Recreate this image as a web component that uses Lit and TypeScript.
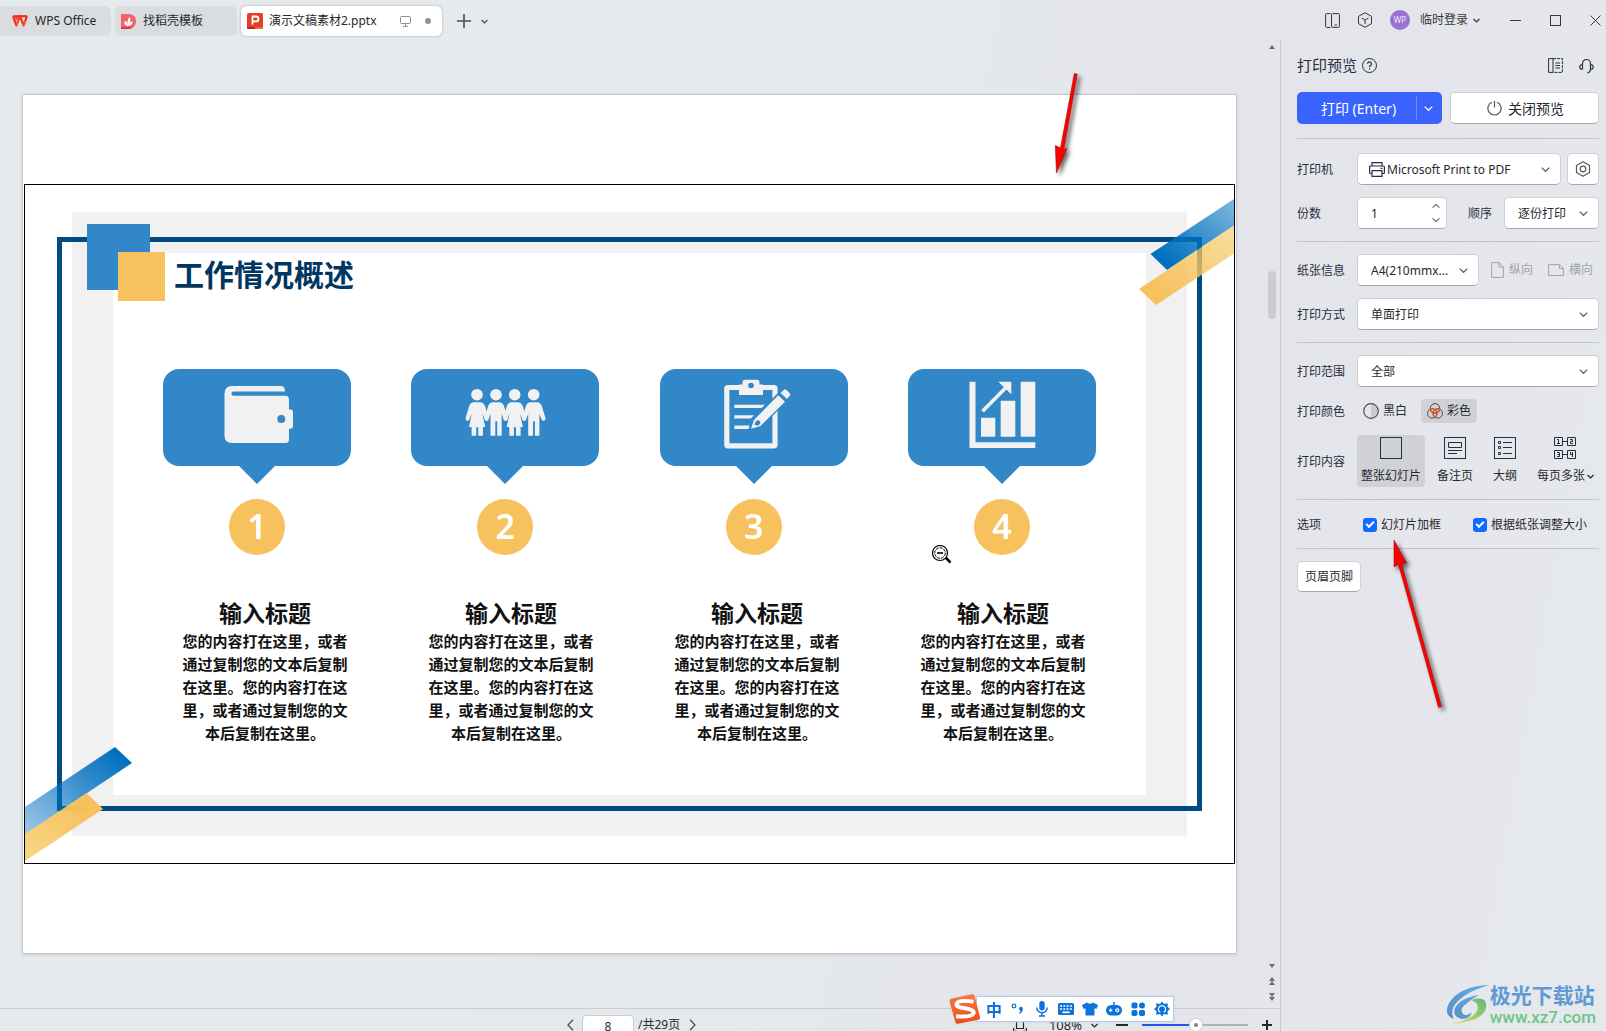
import { LitElement, html, svg, css } from "lit";
import { customElement } from "lit/decorators.js";

const shared = css`
  *, *::before, *::after { box-sizing: border-box; }
  svg { display: block; flex: none; }
  button, input, select {
    font: inherit;
    color: inherit;
    margin: 0;
    padding: 0;
    border: 0;
    background: none;
  }
  button { display: flex; align-items: center; justify-content: center; white-space: nowrap; }
`;

const chevron = (w = 9) => html`<svg width=${w} height=${w} viewBox="0 0 9 9" fill="none" stroke="currentColor" stroke-width=${w < 8 ? 1.700 : 1.200}><path d="M.7 2.600 4.500 6.300 8.300 2.600"/></svg>`;

/* ---------- Title bar with document tabs ---------- */

@customElement("title-bar")
class TitleBar extends LitElement {
  static styles = [shared, css`
    :host { display: flex; height: 40px; padding-top: 6px; color: #26282c; font-size: 12px; line-height: 16px; }
    .tabs { display: flex; gap: 4px; }
    .tab {
      height: 30px;
      border-radius: 6px;
      background: #d9dde0;
      justify-content: flex-start;
      gap: 7px;
      padding: 0 12px 0 6px;
    }
    .home { width: 111px; padding: 0 0 0 12px; border-radius: 0 6px 6px 0; }
    .store { width: 122px; }
    .doc { width: 201px; background: #fff; box-shadow: 0 0 2px 1px #c9cbd0; padding-right: 11px; gap: 6px; }
    .name { flex: 1; text-align: left; }
    .dot { width: 6px; height: 6px; border-radius: 50%; background: #8f9194; margin: 0 0 0 8px; }
    .add { margin-left: 8px; width: 20px; height: 30px; color: #4c4e52; }
    .more { width: 20px; height: 30px; color: #4c4e52; }
    .right { margin-left: auto; display: flex; align-items: center; height: 28px; color: #35373d; }
    .account { gap: 5px; margin-left: 17px; }
    .avatar {
      width: 20px; height: 20px; border-radius: 50%; background: #9874d0; color: #efe6fa;
      font-size: 8px; line-height: 20px; text-align: center; margin-right: 5px;
    }
    .icon { width: 16px; height: 28px; }
    .cube { margin-left: 16px; }
    .min { margin-left: 27px; }
    .max, .close { margin-left: 24px; }
    .close { margin-right: 3px; }
  `];
  render() {
    return html`
      <nav class="tabs">
        <button class="tab home">
          <svg width="16" height="12" viewBox="0 0 16 12"><g fill="none" stroke-width="2.100" stroke-linejoin="round"><path d="M1 1.200h4.200L4 4.400M1 1.200 4.300 10.400 8 1.200l3.600 9.200L15 1.200" stroke="#f2291b"/><path d="M5.400 1.200H15" stroke="#f2291b"/><path d="M4.300 10.400 6.200 5.600M11.600 10.400 13.300 5.600" stroke="#ff5a1c"/></g></svg>
          <span>WPS Office</span>
        </button>
        <button class="tab store">
          <svg width="15" height="16" viewBox="0 0 15 16"><path d="M0 1h7.200C12 1 15 4 15 8.200S12 16 7.200 16H0z" fill="#f4616b"/><path d="M0 14h11.400C10 15.300 8.600 16 7 16H0z" fill="#dc3340"/><path d="M6.800 13C3.500 12.500 3 10 3.800 7.800 5.500 8.600 6.400 10 6.600 11.500 6 8.500 7 5.500 9 3.800c.9 2.500.3 5-1.300 7.500.6-1.500 1.800-2.600 3.800-3C11.800 11 10.200 13 6.800 13z" fill="#fff"/></svg>
          <span>找稻壳模板</span>
        </button>
        <button class="tab doc">
          <svg width="16" height="16" viewBox="0 0 16 16"><rect width="16" height="16" rx="1.500" fill="#e23f24"/><path d="M0 14h8v2H1.500A1.500 1.500 0 0 1 0 14.500z" fill="#b82818"/><path d="M8 14h8v.5a1.500 1.500 0 0 1-1.500 1.500H8z" fill="#f2643f"/><path d="M5.500 11.500v-8H9a2.400 2.400 0 0 1 0 4.900H5.500" fill="none" stroke="#fff" stroke-width="1.800"/></svg>
          <span class="name">演示文稿素材2.pptx</span>
          <svg width="11" height="11" viewBox="0 0 11 11" fill="none" stroke="#8a8c90"><rect x=".5" y=".5" width="10" height="7" rx="1"/><path d="M5.500 7.500v2.500M3 10.300h5"/></svg>
          <span class="dot"></span>
        </button>
        <button class="add" aria-label="新建"><svg width="14" height="14" viewBox="0 0 14 14"><path d="M7 0v14M0 7h14" stroke="currentColor" stroke-width="1.600"/></svg></button>
      </nav>
      <button class="more" aria-label="更多">${chevron(7)}</button>
      <div class="right">
        <button class="icon" aria-label="侧栏"><svg width="15" height="15" viewBox="0 0 15 15" fill="none" stroke="currentColor"><path d="M5.500.6H1.600a1 1 0 0 0-1 1v11.800a1 1 0 0 0 1 1H5.500"/><rect x="6.500" y=".6" width="7.900" height="13.800" rx="1"/><path d="M9.500 12h2.500"/></svg></button>
        <button class="icon cube" aria-label="应用"><svg width="16" height="16" viewBox="0 0 16 16" fill="none" stroke="currentColor" stroke-linejoin="round"><path d="M8 .8 14.500 4.300v7.400L8 15.200 1.500 11.700V4.300zM4.500 6 8 8l3.500-2M8 8v4"/></svg></button>
        <button class="account"><span class="avatar">WP</span><span>临时登录</span>${chevron(7)}</button>
        <button class="icon min" aria-label="最小化"><svg width="11" height="11" viewBox="0 0 11 11"><path d="M0 5.500h11" stroke="currentColor"/></svg></button>
        <button class="icon max" aria-label="最大化"><svg width="11" height="11" viewBox="0 0 11 11" fill="none" stroke="currentColor"><rect x=".5" y=".5" width="10" height="10"/></svg></button>
        <button class="icon close" aria-label="关闭"><svg width="11" height="11" viewBox="0 0 11 11" stroke="currentColor"><path d="m.5.5 10 10M10.500.5l-10 10"/></svg></button>
      </div>`;
  }
}

/* ---------- Slide shown on the sheet ---------- */

const woman = (x: number) => svg`
  <circle cx=${x} cy="25.700" r="5.800"/>
  <path transform="translate(${x} 0)" d="M-3 33.300h6c2.500 0 4.300 1.500 5.200 4.200L11.500 49c.5 2.500-2.500 3.800-3.700 1.500L5.200 44.500 8.300 58H5.900V66.700H1.300V58.300H-.8V66.700H-5.400V58H-8L-5.200 44.500-7.600 50.500c-1.200 2.300-4.400 1-3.800-1.500L-8 37.500c.8-2.700 2.700-4.200 5-4.200z"/>`;
const man = (x: number) => svg`
  <circle cx=${x} cy="25.700" r="5.800"/>
  <path transform="translate(${x} 0)" d="M-3 33.300h6c2.800 0 4.500 1.700 5.200 4.200L11.800 49c.5 2.500-2.700 3.800-3.900 1.500L5.700 45V66.700H1.200V52.300H-.7V66.700H-5.500V45L-7.600 50.500c-1.200 2.300-4.400 1-3.800-1.500L-8 37.500c.8-2.700 2.700-4.200 5-4.200z"/>`;

const pictograms = [
  svg`<path d="M69 17h49q4 0 4 5.600H70a2.200 2.200 0 0 0 0 4.200h52.500q3.500 0 3.500 3.500v10.200h1.500q2.500 0 2.500 2.500v14.300q0 2.400-2.500 2.400H126V70.500q0 3.500-3.500 3.500H69q-7.500 0-7.500-7.500V24.500Q61.500 17 69 17z"/><circle cx="118.300" cy="50" r="4" fill="#3187c7"/>`,
  svg`${woman(66)}${man(85)}${woman(103.700)}${man(122.700)}`,
  svg`<rect x="66.800" y="18.500" width="48.200" height="58.300" rx="1" fill="none" stroke="#f1f1f1" stroke-width="5.200"/>
      <path d="M79 26V15.500h3.500V13.200q0-2.500 2.500-2.500h12q2.500 0 2.500 2.500v2.300H103V26z"/><circle cx="91" cy="16.500" r="2.800" fill="#3187c7"/>
      <path d="M74.300 35.700H105l-3.300 3.400H74.300zM74.300 46.200H94l-3.200 3.200H74.300zM74.300 56.500H89.500l-.8 3.400H74.300z"/>
      <path d="M91 59.700 94 51 124.300 20.500 130.300 25.700 100 57.300z" fill="#3187c7" stroke="#3187c7" stroke-width="4"/>
      <path d="M91 59.700 94 51 118.300 26.300 125 32.700 100.200 57.300zM120.500 24l3.800-3.500q1-.7 2 .2l3.500 3.600q1 1 .2 2L127 30z"/><path d="M94.500 55.800q1-4.500 3.500-4.500 2.800.5 2.300 3.200l-2.200 2.200z" fill="#3187c7"/>`,
  svg`<path d="M61.500 12.700h6V73.200h59.800v5.900H61.500zM73 48.700H87.300V67.700H73zM92.700 31.700H107.300V67.700H92.700zM112.700 12.700H127.300V67.700H112.700z"/><path d="M74.500 42.300 98.500 18" stroke="#f1f1f1" stroke-width="3.700"/><path d="M90.300 12.700h13v12.600z"/>`,
];

@customElement("slide-view")
class SlideView extends LitElement {
  static styles = [shared, css`
    :host {
      display: block; position: relative; border: 1px solid #000; background: #fff; aspect-ratio: 1211 / 680;
      font-family: "Noto Sans", "Noto Sans CJK SC", sans-serif;
    }
    .art { position: absolute; inset: 0; width: 100%; height: 100%; }
    .content { position: relative; padding: 72px 138px 0 138px; }
    h1 { margin: 0 0 80px; padding-left: 11px; font-size: 30px; line-height: 32px; font-weight: 700; color: #003660; font-family: "Noto Sans CJK SC", sans-serif; }
    .bubbles, .texts { display: flex; justify-content: space-between; }
    .step { display: flex; flex-direction: column; align-items: center; width: 188px; }
    .num {
      width: 56px; height: 56px; margin-top: 15px; border-radius: 50%; background: #f7c15e; color: #fff;
      font-size: 34px; line-height: 55px; font-weight: 600; text-align: center;
    }
    .texts { margin-top: 42px; padding: 0 8px 0 17px; }
    .text { width: 170px; text-align: center; color: #111; font-weight: 700; font-family: "Noto Sans CJK SC", sans-serif; }
    h2 { margin: 0 0 2px; font-size: 23px; line-height: 30px; }
    p { margin: 0; font-size: 15px; line-height: 23px; }
  `];
  render() {
    return html`
      <svg class="art" viewBox="25 185 1209 678" preserveAspectRatio="none">
        <defs>
          <linearGradient id="b1" x1="0" y1="1" x2="1" y2="0"><stop offset=".15" stop-color="#0070c0"/><stop offset="1" stop-color="#0070c0" stop-opacity=".5"/></linearGradient>
          <linearGradient id="y1" x1="0" y1="1" x2="1" y2="0"><stop offset=".15" stop-color="#f7c15e"/><stop offset="1" stop-color="#f5c85f" stop-opacity=".6"/></linearGradient>
          <linearGradient id="b2" x1="1" y1="0" x2="0" y2="1"><stop offset=".1" stop-color="#0070c0"/><stop offset="1" stop-color="#0070c0" stop-opacity=".38"/></linearGradient>
          <linearGradient id="y2" x1="1" y1="0" x2="0" y2="1"><stop offset=".2" stop-color="#f7c15e"/><stop offset="1" stop-color="#f5c85f" stop-opacity=".75"/></linearGradient>
        </defs>
        <path d="M72 212H1187V836H72zM113 253V795H1146V253z" fill="#f1f1f1" fill-rule="evenodd"/>
        <rect x="59.500" y="239.500" width="1140" height="569" fill="none" stroke="#004c80" stroke-width="5"/>
        <path d="M87 224h63v66H87z" fill="#3187c7"/><path d="M118 252h47v49h-47z" fill="#f7c15e"/>
        <path d="M1150.500 254 1234 199V225.500L1167 270z" fill="url(#b1)"/>
        <path d="M1139 289 1234 225.500V253.500L1156 305z" fill="url(#y1)"/>
        <path d="M25 807 115 747 132 763 25 834.500z" fill="url(#b2)"/>
        <path d="M25 834 86.500 793 103 809 25 861z" fill="url(#y2)"/>
      </svg>
      <div class="content">
        <h1>工作情况概述</h1>
        <div class="bubbles">
          ${pictograms.map((p, i) => html`<div class="step">
            <svg width="188" height="115" viewBox="0 0 188 115" fill="#f1f1f1"><path d="M16 0H172a16 16 0 0 1 16 16V81a16 16 0 0 1-16 16H112L94 115 76 97H16A16 16 0 0 1 0 81V16A16 16 0 0 1 16 0z" fill="#3187c7"/>${p}</svg>
            <div class="num">${i + 1}</div>
          </div>`)}
        </div>
        <div class="texts">
          ${pictograms.map(() => html`<div class="text"><h2>输入标题</h2><p>您的内容打在这里，或者通过复制您的文本后复制在这里。您的内容打在这里，或者通过复制您的文本后复制在这里。</p></div>`)}
        </div>
      </div>`;
  }
}

/* ---------- Print settings panel ---------- */

@customElement("print-panel")
class PrintPanel extends LitElement {
  static styles = [shared, css`
    :host {
      display: flex; flex-direction: column; width: 326px; flex: none; padding: 14px 7px 0 16px;
      border-left: 1px solid #c6c8cd; color: #272e40; font-size: 12px; line-height: 16px;
    }
    .head { display: flex; align-items: center; height: 22px; font-size: 15px; gap: 5px; }
    .head .tools { margin-left: auto; display: flex; gap: 16px; padding: 2px 5px 0 0; }
    .actions { display: flex; gap: 8px; margin-top: 16px; font-size: 14px; }
    .actions > * { flex: 1; height: 32px; border-radius: 5px; }
    .print { display: flex; background: #3a63fd; color: #fff; }
    .print .go { flex: 1; padding: 1px 0 0 4px; }
    .print .drop { width: 26px; justify-content: flex-start; }
    .print .drop::before { content: ""; width: 1px; height: 24px; background: #6c90fb; margin-right: 7px; }
    .box { background: #fff; border: 1px solid #cdcfd4; border-bottom-color: #a4a6ab; border-radius: 5px; }
    .quit { gap: 6px; color: #26282e; padding: 1px 0 0 2px; }
    hr { width: 100%; height: 1px; border: 0; margin: 0; background: #c2c5cb; flex: none; }
    .group { display: flex; flex-direction: column; gap: 12px; padding: 12px 0; }
    .first { margin-top: 14px; }
    .g1 { padding: 14px 0 12px; }
    .row { display: flex; align-items: center; }
    .lab { width: 60px; flex: none; padding-top: 2px; }
    .pick { position: relative; display: flex; align-items: center; height: 32px; flex: 1; color: #26282e; }
    .pick select { appearance: none; width: 100%; height: 100%; padding: 2px 24px 0 13px; font-size: 12px; background: none; text-overflow: ellipsis; outline: 0; }
    .pick > svg { position: absolute; right: 10px; color: #5c5e64; pointer-events: none; }
    .pick > .lead { left: 11px; right: auto; color: #272e40; }
    .pick .led { padding-left: 29px; }
    .gear { width: 32px; height: 32px; margin-left: 6px; }
    .spin { width: 90px; height: 32px; display: flex; padding-left: 13px; }
    .spin input { width: 50px; flex: 1; outline: 0; padding-top: 2px; color: #26282e; }
    .steps { width: 20px; display: flex; flex-direction: column; justify-content: space-between; padding: 2px 0; }
    .steps button { width: 20px; height: 12px; color: #5c5e64; }
    .up svg { transform: rotate(180deg); }
    .order { padding: 2px 12px 0 21px; }
    .orient { gap: 5px; color: #9fa3ab; }
    .paper { flex: none; width: 122px; }
    .portrait { margin-left: 12px; }
    .landscape { margin-left: 15px; }
    .tint { height: 24px; gap: 4px; border-radius: 4px; padding: 0 6px; color: #26282e; }
    .tint.on, .kind.on { background: #cfd1d5; }
    .tint.on { margin-left: 8px; }
    .kind { flex-direction: column; height: 52px; gap: 9px; justify-content: flex-start; padding: 2px 8px 0; border-radius: 4px; color: #26282e; }
    .kinds { flex: 1; display: flex; justify-content: space-between; }
    .kind.on { padding: 2px 4px 0; }
    .kind.last { padding-right: 5px; }
    .cap { display: flex; align-items: center; gap: 2px; }
    .check { display: flex; align-items: center; gap: 4px; color: #26282e; white-space: nowrap; padding-top: 1px; }
    .check + .check { margin-left: 32px; }
    .check input { appearance: none; width: 14px; height: 14px; border-radius: 3px; background: #0f6cff; display: grid; place-items: center; }
    .check input::before { content: ""; width: 8px; height: 5px; border: solid #fff; border-width: 0 0 2px 2px; transform: rotate(-45deg); margin-bottom: 3px; }
    .options { height: 48px; }
    .ink { margin-left: 6px; }
    .foot { width: 64px; height: 31px; margin-top: 12px; padding-top: 1px; color: #26282e; }
    .brand { margin-top: auto; display: flex; align-items: center; align-self: flex-end; padding: 0 3px 3px 0; }
    .site { display: flex; flex-direction: column; color: #5f9ad3; font: 700 21px/24px "Noto Sans CJK SC", sans-serif; }
    .url { color: #6cc688; font: 500 17px/22px Roboto, sans-serif; }
  `];
  render() {
    const tick = (id: string, label: string) => html`<label class="check" for=${id}><input id=${id} type="checkbox" checked>${label}</label>`;
    return html`
      <div class="head">
        <span>打印预览</span>
        <svg width="15" height="15" viewBox="0 0 15 15" fill="none" stroke="currentColor"><circle cx="7.500" cy="7.500" r="7"/><path d="M5.500 5.800a2 2 0 1 1 3 1.800q-1 .5-1 1.500M7.500 10.200v1.300" stroke-width="1.200"/></svg>
        <span class="tools">
          <svg width="15" height="15" viewBox="0 0 15 15" fill="none" stroke="currentColor"><path d="M.6.600h4.400v13.800H.6z"/><path d="M5 .6h9.400v13.800H5" stroke-dasharray="3 1"/><path d="M7.500 5h4.500M7.500 7.500h4.500M7.500 10h4.500"/></svg>
          <svg width="15" height="16" viewBox="0 0 15 16" fill="none" stroke="currentColor" stroke-width="1.200"><path d="M3.500 11V5.500a4 4 0 0 1 8 0V11q0 3.300-3.200 4M3.500 6.500Q.8 6.700.8 9t2.700 2zM11.500 6.500q2.700.2 2.700 2.500t-2.700 2z"/></svg>
        </span>
      </div>
      <div class="actions">
        <div class="print"><button class="go">打印 (Enter)</button><button class="drop" aria-label="打印选项">${chevron(9)}</button></div>
        <button class="box quit"><svg width="15" height="15" viewBox="0 0 15 15" fill="none" stroke="#54565b" stroke-width="1.200"><path d="M5 1.300a6.600 6.600 0 1 0 5 0M7.500 0v6.500"/></svg>关闭预览</button>
      </div>
      <hr class="first">
      <div class="group g1">
        <div class="row">
          <label class="lab" for="printer">打印机</label>
          <div class="pick box">
            <svg class="lead" width="16" height="15" viewBox="0 0 16 15" fill="none" stroke="currentColor" stroke-width="1.200"><path d="M3 4V.6h10V4M3 11.500H1.500a.9.9 0 0 1-.9-.9V5a1 1 0 0 1 1-1h12.800a1 1 0 0 1 1 1v5.600a.9.900 0 0 1-.9.900H13M3 8.600h10v5.800H3zM11.500 6.300h2"/></svg>
            <select id="printer" class="led"><option>Microsoft Print to PDF</option></select>${chevron()}
          </div>
          <button class="gear box" aria-label="打印机属性"><svg width="16" height="16" viewBox="0 0 16 16" fill="none" stroke="#54565b" stroke-width="1.200"><path d="M8 .8 14.500 4.400v7.200L8 15.200 1.500 11.600V4.400z" stroke-linejoin="round"/><circle cx="8" cy="8" r="2.800"/></svg></button>
        </div>
        <div class="row">
          <label class="lab" for="copies">份数</label>
          <div class="spin box"><input id="copies" type="text" value="1"><span class="steps"><button class="up" aria-label="增加">${chevron(8)}</button><button aria-label="减少">${chevron(8)}</button></span></div>
          <label class="order" for="order">顺序</label>
          <div class="pick box"><select id="order"><option>逐份打印</option></select>${chevron()}</div>
        </div>
      </div>
      <hr>
      <div class="group">
        <div class="row">
          <label class="lab" for="paper">纸张信息</label>
          <div class="pick box paper"><select id="paper"><option>A4(210mmx...</option></select>${chevron()}</div>
          <button class="orient portrait" disabled><svg width="13" height="16" viewBox="0 0 13 16" fill="none" stroke="currentColor"><path d="M.6.600H8L12.400 5v10.400H.6zM8 .6V5h4.400"/></svg>纵向</button>
          <button class="orient landscape" disabled><svg width="16" height="12" viewBox="0 0 16 12" fill="none" stroke="currentColor"><path d="M.6.600H11.500L15.400 4.500v7H.6zM11.500.6v4h4"/></svg>横向</button>
        </div>
        <div class="row">
          <label class="lab" for="sides">打印方式</label>
          <div class="pick box"><select id="sides"><option>单面打印</option></select>${chevron()}</div>
        </div>
      </div>
      <hr>
      <div class="group">
        <div class="row">
          <label class="lab" for="range">打印范围</label>
          <div class="pick box"><select id="range"><option>全部</option></select>${chevron()}</div>
        </div>
        <div class="row">
          <span class="lab">打印颜色</span>
          <button class="tint"><svg width="16" height="16" viewBox="0 0 16 16"><path d="M8 1.500a6.500 6.500 0 0 1 0 13z" fill="#c9cbce"/><circle cx="8" cy="8" r="7.300" fill="none" stroke="#4a4c52" stroke-width="1.200"/></svg>黑白</button>
          <button class="tint on"><svg width="16" height="16" viewBox="0 0 16 16" fill="none" stroke="#4a4c52"><circle cx="8" cy="5.300" r="4.700"/><circle cx="5.200" cy="10.400" r="4.700"/><circle cx="10.800" cy="10.400" r="4.700"/><path d="M3.300 5.900q2.500-.6 4.700.8 2.200-1.400 4.700-.8-.3 2.900-2.500 4 0 2.600-2.200 4.200-2.200-1.600-2.200-4.200-2.200-1.100-2.500-4zM8 6.700q-2 1.400-2.200 3.200 2.200 1 4.400 0Q10 8.100 8 6.700z" stroke="#d2602c" stroke-width="1.300"/></svg>彩色</button>
        </div>
        <div class="row">
          <span class="lab">打印内容</span>
          <div class="kinds">
            <button class="kind on"><svg width="22" height="22" viewBox="0 0 22 22" fill="none" stroke="#272e40"><rect x=".5" y=".5" width="21" height="21"/></svg><span class="cap">整张幻灯片</span></button>
            <button class="kind"><svg width="22" height="22" viewBox="0 0 22 22" fill="none" stroke="#272e40"><rect x=".5" y=".5" width="21" height="21"/><path d="M4.500 5.500h13v5h-13zM4 13.500h14M4 16.500h9"/></svg><span class="cap">备注页</span></button>
            <button class="kind"><svg width="22" height="22" viewBox="0 0 22 22" fill="none" stroke="#272e40"><rect x=".5" y=".5" width="21" height="21"/><path d="M4.500 4.500h2v2h-2zM4.500 9.500h2v2h-2zM4.500 15.500h2v2h-2zM9 5.500h9M9 10.500h9M9 16.500h9"/></svg><span class="cap">大纲</span></button>
            <button class="kind last"><svg width="22" height="22" viewBox="0 0 22 22" fill="none" stroke="#272e40"><path d="M.5.5h8v8h-8zM13.500.5h8v8h-8zM.5 13.500h8v8h-8zM13.500 13.500h8v8h-8zM8.500 4.500h5M8.500 17.500h5"/><path d="M3 2.500h1.500V7M3 6.500h3M16 2.500h2.500v2h-2v2H19M3 15.500h2.500v4H3M3.500 17.500h2M16.500 15v2.500h2.500M18.500 15v5"/></svg><span class="cap">每页多张${chevron(7)}</span></button>
          </div>
        </div>
      </div>
      <hr>
      <div class="row options">
        <span class="lab">选项</span><span class="ink"></span>
        ${tick("frame", "幻灯片加框")}${tick("fit", "根据纸张调整大小")}
      </div>
      <hr>
      <button class="foot box">页眉页脚</button>
      <div class="brand">
        <svg width="44" height="42" viewBox="0 0 44 42"><defs><linearGradient id="s1" x1="0" y1="1" x2="1" y2="0"><stop stop-color="#5c8fc8"/><stop offset="1" stop-color="#5cb0e4"/></linearGradient><linearGradient id="s2" x1="0" y1="1" x2="1" y2="0"><stop stop-color="#e2dd5a"/><stop offset="1" stop-color="#5dbb7c"/></linearGradient></defs>
          <path d="M43 1Q14 2 3 19-3 31 8 35 3 26 12 17 22 7 43 1zM33 11Q14 14 9 24q-3 9 7 11 8 0 10-7-5 5-9 2-4-5 3-10 5-5 13-9z" fill="url(#s1)"/><path d="M25 16q17-5 15 8-4 14-36 16 22-4 27-13 3-8-6-11z" fill="url(#s2)"/></svg>
        <div class="site"><span>极光下载站</span><span class="url">www.xz7.com</span></div>
      </div>`;
  }
}

/* ---------- Page navigation and zoom ---------- */

@customElement("status-bar")
class StatusBar extends LitElement {
  static styles = [shared, css`
    :host { display: block; height: 23px; overflow: hidden; border-top: 1px solid #c9ccd0; color: #26282e; font-size: 12px; line-height: 16px; }
    .bar { display: flex; align-items: center; height: 32px; padding: 0 6px 0 563px; }
    .nav { width: 14px; height: 20px; color: #4c4e52; }
    input[type="text"] { width: 52px; height: 21px; margin: 0 4px 0 5px; border: 1px solid #c9ccd0; border-radius: 4px; background: #fff; text-align: center; padding-top: 2px; }
    .total { margin-right: 5px; }
    .zoom { margin-left: auto; display: flex; align-items: center; }
    .pct { font-size: 13px; margin: 0 9px 0 22px; gap: 9px; }
    .minus, .plus { width: 14px; height: 20px; }
    .minus { margin-left: 8px; }
    .plus { margin-left: 12px; }
    input[type="range"] {
      appearance: none; width: 106px; height: 12px; margin-left: 13px;
      background: linear-gradient(90deg, #2554e8 50%, #b0b2b6 50%) center / 100% 2px no-repeat;
    }
    input[type="range"]::-webkit-slider-thumb { appearance: none; width: 12px; height: 12px; border-radius: 50%; background: #808286; border: 4px solid #fff; box-shadow: 0 0 1px 1px #d0d2d6; }
  `];
  render() {
    return html`<div class="bar">
      <button class="nav" aria-label="上一页"><svg width="7" height="12" viewBox="0 0 7 12" fill="none" stroke="currentColor" stroke-width="1.300"><path d="M6 .8 1 6l5 5.200"/></svg></button>
      <input type="text" value="8" aria-label="页码">
      <span class="total">/共29页</span>
      <button class="nav" aria-label="下一页"><svg width="7" height="12" viewBox="0 0 7 12" fill="none" stroke="currentColor" stroke-width="1.300"><path d="m1 .8 5 5.200-5 5.200"/></svg></button>
      <div class="zoom">
        <svg width="14" height="14" viewBox="0 0 14 14" fill="none" stroke="currentColor" stroke-width="1.200"><path d="M.6 4V.6H4M10 .6h3.400V4M.6 10v3.400H4M10 13.400h3.400V10M3.500 3.500h7v7h-7z"/></svg>
        <button class="pct">108%${chevron(7)}</button>
        <button class="minus" aria-label="缩小"><svg width="12" height="2" viewBox="0 0 12 2"><path d="M0 0h12v2H0z" fill="currentColor"/></svg></button>
        <input type="range" min="0" max="100" value="51" aria-label="缩放">
        <button class="plus" aria-label="放大"><svg width="10" height="10" viewBox="0 0 10 10"><path d="M5 0v10M0 5h10" stroke="currentColor" stroke-width="2"/></svg></button>
      </div>
    </div>`;
  }
}

/* ---------- Floating input method toolbar ---------- */

const imeIcons = [
  { name: "标点", art: svg`<circle cx="4" cy="5" r="1.800" fill="none" stroke="#0c72dc" stroke-width="1.300"/><path d="M9 7.500a1.900 1.900 0 1 1 3.800.3Q12.700 11.500 9.500 13l-.5-1q1.400-.8 1.500-2.300Q9 9.400 9 7.500z"/>` },
  { name: "语音", art: svg`<rect x="5.300" y="0" width="5.400" height="9.500" rx="2.700"/><path d="M2.800 6.500a5.200 5.200 0 0 0 10.400 0M8 11.700v3M5 15h6" fill="none" stroke="#0c72dc" stroke-width="1.500"/>` },
  { name: "键盘", art: svg`<path d="M1.500 2h13A1.500 1.500 0 0 1 16 3.500v9a1.500 1.500 0 0 1-1.500 1.500h-13A1.500 1.500 0 0 1 0 12.500v-9A1.500 1.500 0 0 1 1.500 2z"/><path d="M2 5h12M2 8h12" stroke="#fff" stroke-width="1.700" stroke-dasharray="2 1.300"/><path d="M4.500 11.300h7" stroke="#fff" stroke-width="1.700"/>` },
  { name: "皮肤", art: svg`<path d="M5 1.500q3 2.500 6 0L16 4l-1.500 4-2-.8V14.500h-9V7.200l-2 .8L0 4z"/>` },
  { name: "助手", art: svg`<path d="M8 1v3" stroke="#0c72dc" stroke-width="1.500"/><rect x="0" y="4" width="16" height="10.500" rx="5.200"/><path d="M3 9.300h3.400M4.700 7.600V11" stroke="#fff" stroke-width="1.200"/><circle cx="11.300" cy="9.300" r="1.500" fill="none" stroke="#fff" stroke-width="1.200"/>` },
  { name: "工具箱", art: svg`<rect x="1.500" y="1.500" width="6" height="6" rx="1.800"/><rect x="9" y="1.500" width="6" height="6" rx="3"/><rect x="1.500" y="9" width="6" height="6" rx="1.800"/><rect x="9" y="9" width="6" height="6" rx="1.800"/>` },
  { name: "设置", art: svg`<path d="M8 .5 10 3l3.800-.8-.3 3.600L16 8l-2.500 2.200.3 3.600L10 13l-2 2.500L6 13l-3.800.8.3-3.600L0 8l2.500-2.200-.3-3.600L6 3z"/><path d="M6.300 11.300a3.600 3.600 0 1 1 3.400 0" fill="none" stroke="#fff" stroke-width="1.200"/><path d="M7.300 8h1.400v6H7.300z"/><circle cx="8" cy="7.800" r="1.500"/>` },
];

@customElement("ime-bar")
class ImeBar extends LitElement {
  static styles = [shared, css`
    :host { display: flex; align-items: center; filter: drop-shadow(0 0 1px #c8d4e6); }
    .logo { position: relative; z-index: 1; margin-right: -5px; }
    .bar { display: flex; align-items: center; gap: 8px; height: 26px; padding: 0 3px 0 9px; background: #fff; border: 1px solid #b9cce6; }
    button { width: 16px; height: 20px; color: #0c72dc; font-size: 16px; font-weight: 700; }
  `];
  render() {
    return html`
      <svg class="logo" width="32" height="30" viewBox="0 0 32 30"><defs><linearGradient id="o" x1="0" y1="0" x2="0" y2="1"><stop stop-color="#f97a45"/><stop offset="1" stop-color="#f04a14"/></linearGradient></defs><path d="M3 4.500 23 .2q2-.4 2.500 1.500L31 23q.5 2-1.500 2.700L9 29.800q-2 .4-2.600-1.500L.6 7.200Q0 5 3 4.500z" fill="url(#o)"/><path d="M24.500 7.800Q8 5 7.500 10.700q0 2.600 8.500 3.600 9.300 1.400 8.700 4.700Q23.500 23.500 7 22.300" fill="none" stroke="#fff" stroke-width="4"/></svg>
      <div class="bar"><button>中</button>${imeIcons.map((i) => html`<button aria-label=${i.name}><svg width="16" height="16" viewBox="0 0 16 16" fill="#0c72dc">${i.art}</svg></button>`)}</div>`;
  }
}

/* ---------- Application shell ---------- */

@customElement("app-root")
class AppRoot extends LitElement {
  static styles = [shared, css`
    :host {
      display: flex; flex-direction: column; height: 100vh; overflow: hidden; position: relative;
      background: linear-gradient(100deg, #e5eaec 30%, #e4e5eb 75%, #e5e8ec);
      font-family: "Noto Sans", "Noto Sans CJK SC", sans-serif;
    }
    .main { flex: 1; display: flex; min-height: 0; }
    .left { flex: 1; display: flex; flex-direction: column; min-width: 0; }
    .stage { flex: 1; display: flex; min-height: 0; overflow: hidden; }
    .canvas { flex: 1; padding: 54px 27px 0 22px; }
    .sheet {
      display: flex; flex-direction: column; justify-content: center; aspect-ratio: 1215 / 860; padding: 0 1px;
      background: #fff; border: 1px solid #c4c8cd; box-shadow: 0 1px 3px #c9ccd0;
    }
    .scroll { width: 16px; display: flex; flex-direction: column; align-items: center; padding: 4px 0 7px; color: #6c6e72; }
    .thumb { width: 8px; height: 48px; border-radius: 4px; background: #cbccd1; margin-top: 221px; }
    .ends { margin-top: auto; display: flex; flex-direction: column; gap: 8px; }
    .over { position: absolute; pointer-events: none; overflow: visible; filter: drop-shadow(3px 3px 2px #0009); }
    .a1 { left: 1050px; top: 70px; }
    .a2 { left: 1390px; top: 538px; }
    .cursor { position: absolute; left: 932px; top: 545px; pointer-events: none; }
    .ime { position: absolute; left: 949px; bottom: 7px; }
  `];
  render() {
    const tri = (d: string, h: number) => html`<svg width="6" height=${h} viewBox="0 0 6 ${h}" fill="currentColor"><path d=${d}/></svg>`;
    return html`
      <title-bar></title-bar>
      <div class="main">
        <div class="left">
          <div class="stage">
            <main class="canvas"><div class="sheet"><slide-view></slide-view></div></main>
            <div class="scroll">
              ${tri("M3 1 6 5H0z", 6)}
              <div class="thumb"></div>
              <div class="ends">${tri("M0 1h6L3 5z", 6)}${tri("M3 0 6 4H0zM3 4 6 8H0z", 8)}${tri("M0 0h6L3 4zM0 4h6L3 8z", 8)}</div>
            </div>
          </div>
          <status-bar></status-bar>
        </div>
        <print-panel></print-panel>
      </div>
      <svg class="over a1" width="30" height="106" viewBox="0 0 30 106"><path d="M24.300 3.500 27.300 4 13.800 80 17 78 6.500 103 5.300 75.500 10.500 78z" fill="#f00" stroke="#900" stroke-width=".5"/></svg>
      <svg class="over a2" width="54" height="172" viewBox="0 0 54 172"><path d="M4 2 16.500 25 11.500 25.500 51.500 168.500 48.500 169.500 8.500 26.500 4 29z" fill="#f00" stroke="#900" stroke-width=".5"/></svg>
      <svg class="cursor" width="20" height="20" viewBox="0 0 20 20" fill="none"><circle cx="8" cy="8" r="6.300" fill="#fff" stroke="#fff" stroke-width="3"/><circle cx="8" cy="8" r="7.500" stroke="#000" stroke-width="1.200"/><circle cx="8" cy="8" r="5.300" stroke="#000" stroke-dasharray="3 1"/><path d="M5 8h6" stroke="#000" stroke-width="1.600"/><path d="m13.500 12.500 5 5" stroke="#000" stroke-width="2.500"/></svg>
      <ime-bar class="ime"></ime-bar>`;
  }
}
